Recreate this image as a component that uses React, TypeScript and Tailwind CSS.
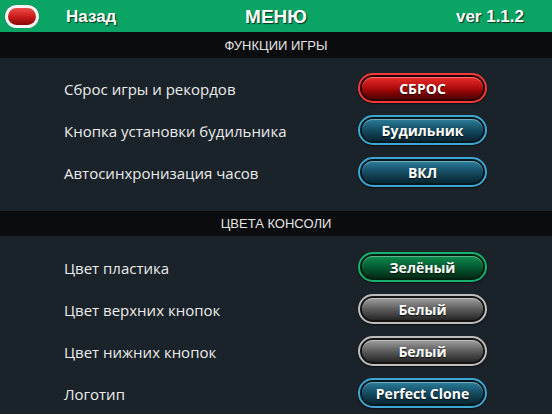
const SECTIONS = [
  {
    title: "ФУНКЦИИ ИГРЫ",
    band: "h-[26px]",
    pad: "pt-[9px] pb-[18px]",
    rows: [
      { label: "Сброс игры и рекордов", value: "СБРОС", tone: "red" },
      { label: "Кнопка установки будильника", value: "Будильник", tone: "blue" },
      { label: "Автосинхронизация часов", value: "ВКЛ", tone: "blue" },
    ],
  },
  {
    title: "ЦВЕТА КОНСОЛИ",
    band: "h-[25px]",
    pad: "pt-[10px]",
    rows: [
      { label: "Цвет пластика", value: "Зелёный", tone: "green" },
      { label: "Цвет верхних кнопок", value: "Белый", tone: "gray" },
      { label: "Цвет нижних кнопок", value: "Белый", tone: "gray" },
      { label: "Логотип", value: "Perfect Clone", tone: "blue" },
    ],
  },
];

// ring = outer light edge, inner = gradient face
const TONES: Record<string, { ring: string; inner: string }> = {
  red: {
    ring: "border-[#f03a3a] bg-[#2a0000]",
    inner: "bg-gradient-to-b from-[#ee2a2a] via-[#b00c0c] to-[#500000]",
  },
  blue: {
    ring: "border-[#3fa6d2] bg-[#041820]",
    inner: "bg-gradient-to-b from-[#2c7f9e] via-[#154c62] to-[#082632]",
  },
  green: {
    ring: "border-[#17b070] bg-[#00200f]",
    inner: "bg-gradient-to-b from-[#0c8e4e] via-[#055c31] to-[#012c16]",
  },
  gray: {
    ring: "border-[#bdbdbd] bg-[#141414]",
    inner: "bg-gradient-to-b from-[#a0a0a0] via-[#5e5e5e] to-[#262626]",
  },
};

function PillButton({ value, tone }: { value: string; tone: string }) {
  const t = TONES[tone];
  return (
    <div className={`flex h-[30px] w-[129px] rounded-full border-2 p-[2px] shadow-[0_1px_2px_rgba(0,0,0,0.6)] ${t.ring}`}>
      <div
        className={`flex flex-1 items-center justify-center rounded-full text-[14px] font-bold text-white shadow-[inset_0_1px_0_rgba(255,255,255,0.35)] [text-shadow:0_1px_1px_rgba(0,0,0,0.8)] ${t.inner}`}
        style={{ fontFamily: '"Open Sans", sans-serif' }}>
        {value}
      </div>
    </div>
  );
}

export default function App() {
  return (
    <div className="flex h-[414px] w-[552px] flex-col overflow-hidden bg-[#1b232a]">
      <header
        className="grid h-[34px] grid-cols-[1fr_auto_1fr] items-center bg-[#0aa565] pt-[2px] text-white [text-shadow:1px_1px_1px_rgba(0,0,0,0.7)]"
        style={{ fontFamily: '"Liberation Sans", Arial, sans-serif' }}>
        <div className="flex items-center">
          <div className="ml-[5px] -mt-[2px] flex h-[23px] w-[34px] items-center justify-center rounded-full bg-[#f4f4f4] shadow-[0_0_1px_rgba(0,0,0,0.5)]">
            <div className="h-[17px] w-[28px] rounded-full bg-gradient-to-b from-[#ee4a4a] via-[#cc1c1c] to-[#8a0808]" />
          </div>
          <div className="ml-[27px] text-[17px] font-bold">Назад</div>
        </div>
        <div className="text-center text-[19px] font-bold">МЕНЮ</div>
        <div className="mr-[28px] text-right text-[17px] font-bold">ver 1.1.2</div>
      </header>

      {SECTIONS.map((section) => (
        <section key={section.title}>
          <div
            className={`flex items-center justify-center bg-[#0b0c0e] pt-[1px] text-[13px] text-[#e4e4e4] ${section.band}`}
            style={{ fontFamily: '"Liberation Sans", Arial, sans-serif' }}>
            {section.title}
          </div>
          <div className={`flex flex-col ${section.pad}`}>
            {section.rows.map((row) => (
              <div key={row.label} className="flex h-[42px] items-center justify-between pl-[64px] pr-[65px]">
                <span className="pt-[2px] text-[15px] text-[#ececec]" style={{ fontFamily: '"Open Sans", sans-serif' }}>
                  {row.label}
                </span>
                <PillButton value={row.value} tone={row.tone} />
              </div>
            ))}
          </div>
        </section>
      ))}
    </div>
  );
}
